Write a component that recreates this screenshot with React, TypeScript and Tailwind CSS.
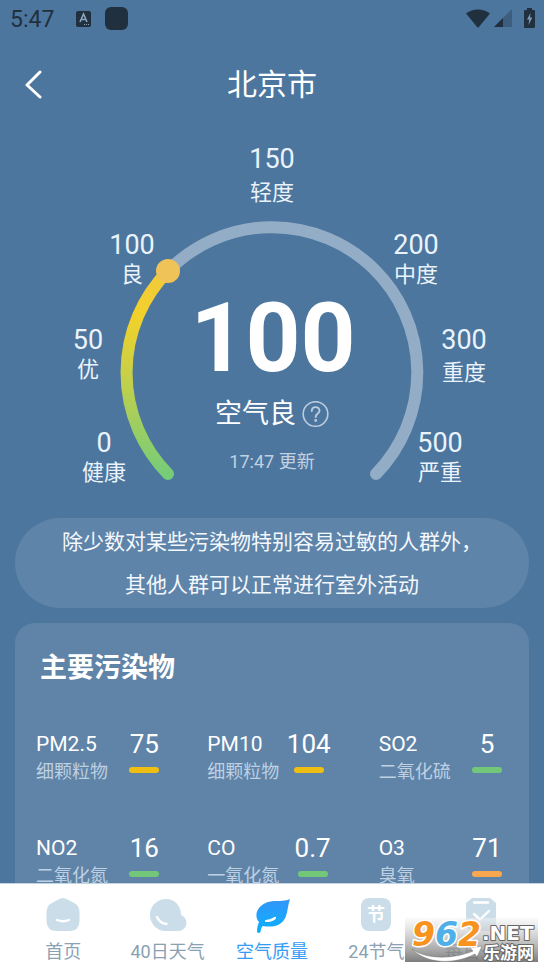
import React from 'react';

interface Level {
	value: string;
	label: string;
	x: number;
	valueY: number;
	labelY: number;
}

interface Pollutant {
	name: string;
	description: string;
	value: string;
	color: string;
}

interface NavItemProps {
	label: string;
	active?: boolean;
	children: React.ReactNode;
}

const levels: Level[] = [
	{ value: '0', label: '健康', x: 52, valueY: 320, labelY: 348 },
	{ value: '50', label: '优', x: 36, valueY: 217, labelY: 245 },
	{ value: '100', label: '良', x: 80, valueY: 122, labelY: 150 },
	{ value: '150', label: '轻度', x: 220, valueY: 36, labelY: 68 },
	{ value: '200', label: '中度', x: 364, valueY: 122, labelY: 150 },
	{ value: '300', label: '重度', x: 412, valueY: 217, labelY: 248 },
	{ value: '500', label: '严重', x: 388, valueY: 320, labelY: 348 },
];

const pollutants: Pollutant[] = [
	{ name: 'PM2.5', description: '细颗粒物', value: '75', color: 'bg-[#efbe12]' },
	{ name: 'PM10', description: '细颗粒物', value: '104', color: 'bg-[#efbe12]' },
	{ name: 'SO2', description: '二氧化硫', value: '5', color: 'bg-[#72c878]' },
	{ name: 'NO2', description: '二氧化氮', value: '16', color: 'bg-[#72c878]' },
	{ name: 'CO', description: '一氧化氮', value: '0.7', color: 'bg-[#72c878]' },
	{ name: 'O3', description: '臭氧', value: '71', color: 'bg-[#fba750]' },
];

const StatusBar = () => (
	<div className="flex items-center justify-between h-9 pl-[10px] pr-[9px] text-[#20303f]">
		<div className="flex items-center">
			<span className="w-[46px] pt-1 text-[23px] leading-8">5:47</span>
			<svg className="ml-5" width="15" height="17" viewBox="0 0 15 17">
				<rect width="15" height="16" y="1" rx="2" fill="currentColor" />
				<path
					d="M4 12 7.500 4 11 12M5.300 9.500h4.400"
					fill="none"
					stroke="#8aa6bf"
					strokeWidth="1.600"
				/>
				<path d="M8 14.500h5" stroke="#8aa6bf" strokeDasharray="1 1" />
			</svg>
			<span className="w-[23px] h-[23px] ml-[14px] rounded-md bg-[#20303f]" />
		</div>
		<div className="flex items-center">
			<svg width="24" height="19" viewBox="0 0 24 19">
				<path d="M0 4.500C7-1 17-1 24 4.500L12 19Z" fill="currentColor" />
			</svg>
			<svg className="ml-1" width="18" height="18" viewBox="0 0 18 18">
				<path d="M18 0v18H0Z" fill="#3d5e7e" />
				<path d="M9 9v9H0Z" fill="currentColor" />
			</svg>
			<svg className="ml-3" width="11" height="20" viewBox="0 0 11 20">
				<path
					d="M3 0h5v2h2a1 1 0 0 1 1 1v16a1 1 0 0 1-1 1H1a1 1 0 0 1-1-1V3a1 1 0 0 1 1-1h2Z"
					fill="currentColor"
				/>
				<path d="M6.500 5 3 11.500h2.200L4.500 17 8.300 9.500H6Z" fill="#7d9bb6" />
			</svg>
		</div>
	</div>
);

const Header = () => (
	<header className="grid items-center h-24 grid-cols-[48px_1fr_48px]">
		<button type="button" aria-label="返回" className="flex pl-6">
			<svg width="20" height="30" viewBox="0 0 20 30">
				<path
					d="M16 3 3 16 16 28"
					fill="none"
					stroke="white"
					strokeWidth="3"
					strokeLinecap="round"
					strokeLinejoin="round"
				/>
			</svg>
		</button>
		<h1 className="pt-0.5 text-center text-white text-[30px] leading-10">北京市</h1>
	</header>
);

const Gauge = () => (
	<section className="grid justify-center">
		<svg
			className="col-start-1 row-start-1"
			width="440"
			height="386"
			viewBox="0 0 440 386"
		>
			<defs>
				<linearGradient id="level" x1="0" y1="1" x2="0" y2="0">
					<stop offset="0" stopColor="#76cc79" />
					<stop offset="0.500" stopColor="#c9d046" />
					<stop offset="0.780" stopColor="#f3d12a" />
					<stop offset="1" stopColor="#f1c93f" />
				</linearGradient>
			</defs>
			<g fill="none" strokeWidth="12" strokeLinecap="round">
				<path d="M116 139A145 145 0 0 1 324 342" stroke="#94adc7" />
				<path d="M116 342A145 145 0 0 1 116 139" stroke="url(#level)" />
			</g>
			<circle cx="116" cy="139" r="12" fill="#f0c358" />
			{levels.map(({ value, label, x, valueY, labelY }) => (
				<g key={value} fill="#eaf3fc" textAnchor="middle">
					<text x={x} y={valueY} fontSize="27">
						{value}
					</text>
					<text x={x} y={labelY} fontSize="22">
						{label}
					</text>
				</g>
			))}
		</svg>
		<div className="flex flex-col items-center col-start-1 row-start-1 pt-[158px] text-white">
			<strong className="pl-0.5 font-bold leading-none text-8xl">100</strong>
			<div className="flex items-center mt-2.5">
				<span className="text-[27px] leading-9">空气良</span>
				<button type="button" aria-label="说明" className="ml-1.5">
					<svg width="27" height="27" viewBox="0 0 27 27" fill="none">
						<g stroke="#bccde0" strokeLinecap="round" strokeLinejoin="round">
							<circle cx="13.500" cy="13" r="12.300" strokeWidth="1.600" />
							<path
								d="M9.800 10C9.800 4.800 17.500 5 17.500 9.700C17.500 12.500 13.700 12.500 13.700 16"
								strokeWidth="1.900"
							/>
						</g>
						<circle cx="13.700" cy="19.500" r="1.400" fill="#bccde0" />
					</svg>
				</button>
			</div>
			<p className="mt-[18px] text-lg leading-6 text-[#c1d1e2]">17:47 更新</p>
		</div>
	</section>
);

const PollutantCell = ({ name, description, value, color }: Pollutant) => (
	<div className="flex items-start justify-between pl-[21px] pr-[27px]">
		<dt className="text-white text-[21px] leading-7">
			{name}
			<span className="block text-lg leading-7 text-[#bed0e2]">{description}</span>
		</dt>
		<dd className="flex flex-col items-center text-white text-[26px] leading-7">
			{value}
			<span className={`w-[30px] h-1.5 mt-[9px] rounded-full ${color}`} />
		</dd>
	</div>
);

const NavItem = ({ label, active, children }: NavItemProps) => (
	<a
		href="#"
		aria-current={active ? 'page' : undefined}
		className={`flex flex-col items-center text-lg leading-6 whitespace-nowrap ${
			active ? 'text-[#359bf4]' : 'text-[#8aa1b2]'
		}`}
	>
		<svg className="mb-1.5" width="38" height="38" viewBox="0 0 38 38" fill="none">
			{children}
		</svg>
		{label}
	</a>
);

const Watermark = () => (
	<svg
		className="absolute right-1.5 bottom-1.5 overflow-visible"
		width="133"
		height="44"
		viewBox="0 0 133 44"
	>
		<defs>
			<linearGradient id="shade" x1="0" y1="0" x2="0" y2="1">
				<stop offset="0" stopColor="#f4f4f4" stopOpacity="0.500" />
				<stop offset="0.500" stopColor="#b0b0b0" stopOpacity="0.700" />
				<stop offset="1" stopColor="#666" stopOpacity="0.850" />
			</linearGradient>
		</defs>
		<rect width="133" height="44" fill="url(#shade)" />
		<path
			d="M7 31C22 42 49 41 68 33L65 30 77 28 72 39 70 36C49 47 21 46 7 31Z"
			fill="white"
			stroke="#777"
			strokeWidth="0.500"
		/>
		<g
			fontFamily="'DejaVu Sans', sans-serif"
			fontWeight="bold"
			stroke="white"
			strokeWidth="3"
			strokeLinejoin="round"
			paintOrder="stroke"
		>
			<text x="7" y="28" fontSize="33" fontStyle="italic" fill="#f7931e">
				9<tspan fill="#4fb0e8">6</tspan>2
			</text>
		</g>
		<g
			fontWeight="bold"
			fill="white"
			stroke="#666"
			strokeWidth="2"
			strokeLinejoin="round"
			paintOrder="stroke"
		>
			<text x="77" y="22" fontSize="20" fontFamily="'DejaVu Sans', sans-serif">
				.NET
			</text>
			<text x="78" y="41" fontSize="17">
				乐游网
			</text>
		</g>
	</svg>
);

const BottomNav = () => (
	<nav className="relative grid grid-cols-5 px-[11px] pt-3 pb-1 bg-white border-t border-[#c5d4e2]">
		<NavItem label="首页">
			<path
				d="M14.500 3.500Q19 0.500 23.500 3.500L31 7.500Q35.500 10 35.500 17V25Q35.500 35 25 35H13Q2.500 35 2.500 25V17Q2.500 10 7 7.500Z"
				fill="#cadde9"
			/>
			<path d="M13 24Q19 26.500 25 24" stroke="white" strokeWidth="2.400" strokeLinecap="round" />
		</NavItem>
		<NavItem label="40日天气">
			<path
				d="M17 3C27 3 32 11 32 19C40 22 39 34 30 35H17C7 35 1 27 1 19C1 10 8 3 17 3Z"
				fill="#cadde9"
			/>
			<path d="M8 21Q11 27.500 17.500 28" stroke="white" strokeWidth="2.400" strokeLinecap="round" />
		</NavItem>
		<NavItem label="空气质量" active>
			<defs>
				<linearGradient id="leaf" x1="0" y1="0" x2="0" y2="1">
					<stop offset="0" stopColor="#3595fb" />
					<stop offset="1" stopColor="#08b1fb" />
				</linearGradient>
			</defs>
			<path
				d="M37 3C35 8 35 14 33 20C30 29 21 32 10 30C8 31 8 34 7.500 36Q6 38 4 36C4 33 4.500 29 6 26C0 19 5 9 15 6C22 4 31 6 37 3Z"
				fill="url(#leaf)"
			/>
			<path d="M13 25Q18 25 22 22" stroke="white" strokeWidth="2.200" strokeLinecap="round" />
		</NavItem>
		<NavItem label="24节气">
			<rect x="4" y="2" width="30" height="33" rx="8" fill="#cadde9" />
			<text x="19" y="25" fontSize="18" fontWeight="bold" textAnchor="middle" fill="white">
				节
			</text>
		</NavItem>
		<NavItem label="每日一签">
			<path d="M10 2H28L34 7V27Q34 35 26 35H12Q4 35 4 27V7Z" fill="#cadde9" />
			<path
				d="M12 6.500H26M12 18 18 23.500 27 15"
				stroke="white"
				strokeWidth="2.400"
				strokeLinecap="round"
				strokeLinejoin="round"
			/>
		</NavItem>
		<Watermark />
	</nav>
);

const App = () => {
	return (
		<div className="flex flex-col h-screen bg-[#4c769e] font-[Roboto,'Noto_Sans_CJK_SC',sans-serif]">
			<main className="flex-1 min-h-0 overflow-y-auto [scrollbar-width:none]">
				<StatusBar />
				<Header />
				<Gauge />
				<p className="px-10 pt-[3px] pb-px mx-[15px] text-center text-[#f3f8fd] rounded-[45px] bg-[#5f84a9] text-[21px] leading-[43px]">
					除少数对某些污染物特别容易过敏的人群外，
					<br />
					其他人群可以正常进行室外活动
				</p>
				<section className="mx-[15px] mt-[15px] pt-[25px] pb-6 rounded-[20px] bg-[#5f84a8]">
					<h2 className="pl-[25px] font-bold text-white text-[27px] leading-10">
						主要污染物
					</h2>
					<dl className="grid grid-cols-3 mt-[42px] gap-y-12">
						{pollutants.map((pollutant) => (
							<PollutantCell key={pollutant.name} {...pollutant} />
						))}
					</dl>
				</section>
			</main>
			<BottomNav />
		</div>
	);
};

export default App;
